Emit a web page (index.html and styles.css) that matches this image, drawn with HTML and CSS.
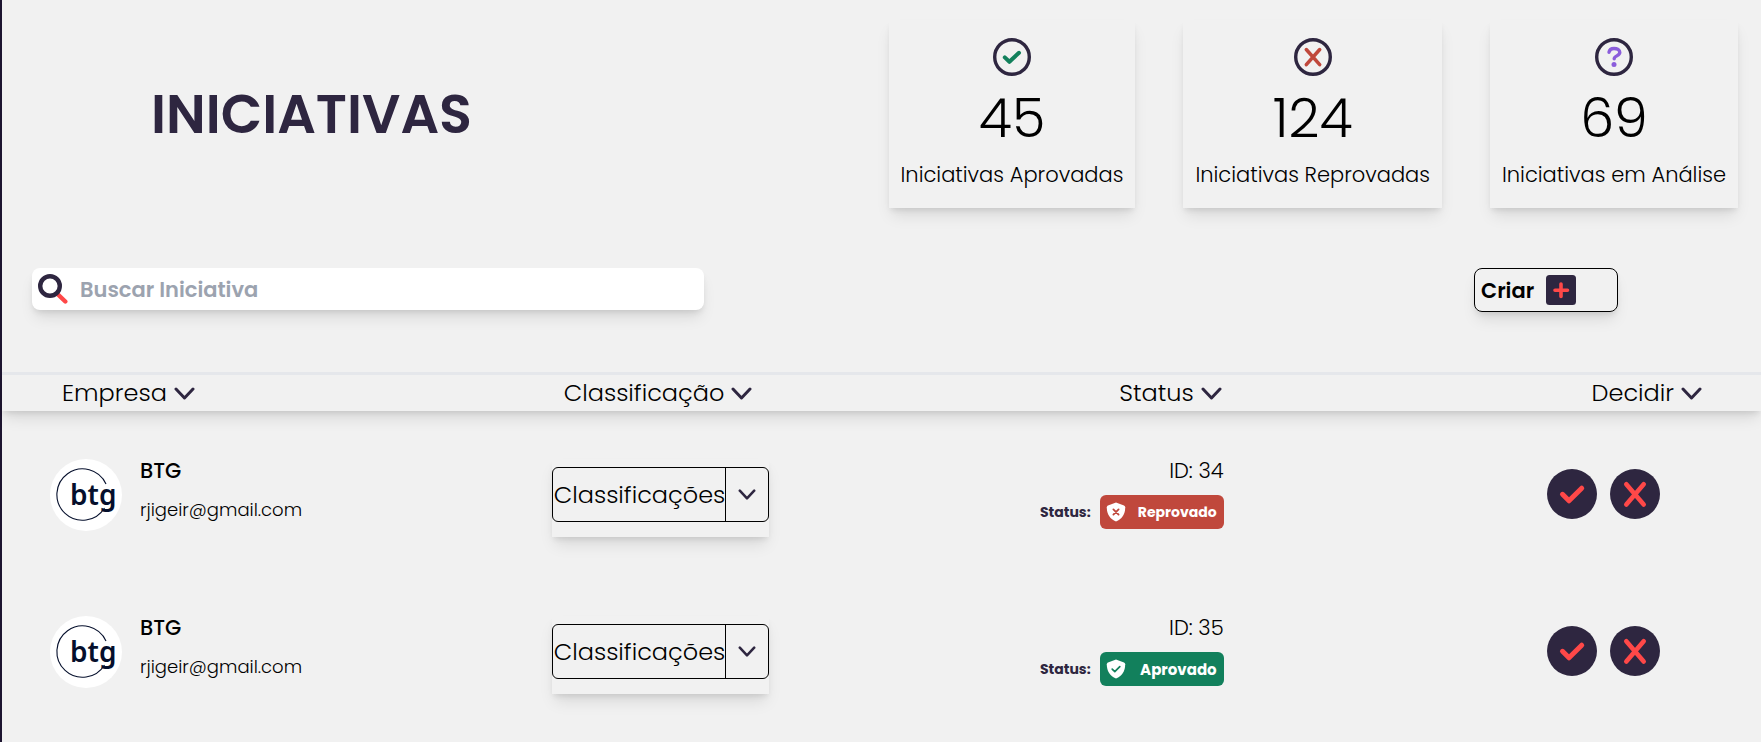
FILE: index.html
```html
<!DOCTYPE html>
<html lang="pt-BR">
<head>
  <meta charset="utf-8">
  <meta name="viewport" content="width=device-width, initial-scale=1">
  <title>Iniciativas</title>
  <link rel="stylesheet" href="styles.css">
</head>
<body>
  <svg class="sprite" aria-hidden="true">
    <symbol id="chevron" viewBox="0 0 21 13"><path d="M2 2l8.500 9L19 2" fill="none" stroke="#2e2640" stroke-width="3" stroke-linecap="round" stroke-linejoin="round"/></symbol>
    <symbol id="accept" viewBox="0 0 50 50"><circle cx="25" cy="25" r="25" fill="#2e2640"/><path d="M15.500 25.300l6.500 6.500L34.700 19.200" fill="none" stroke="#ff4848" stroke-width="5" stroke-linecap="round" stroke-linejoin="round"/></symbol>
    <symbol id="reject" viewBox="0 0 50 50"><circle cx="25" cy="25" r="25" fill="#2e2640"/><path d="M16.300 15.200L33.700 35.600M33.700 15.200L16.300 35.600" fill="none" stroke="#ff4848" stroke-width="4.600" stroke-linecap="round"/></symbol>
  </svg>

  <main class="page">
    <header class="top">
      <h1 class="title">INICIATIVAS</h1>
      <ul class="stats">
        <li class="stat">
          <svg class="stat-icon" viewBox="0 0 38 38" aria-hidden="true"><circle cx="19" cy="19" r="17.300" fill="none" stroke="#2e2640" stroke-width="3.400"/><path d="M11.800 19.400l4.600 4.400 9.600-9" fill="none" stroke="#12805c" stroke-width="4" stroke-linecap="round" stroke-linejoin="round"/></svg>
          <strong class="stat-value">45</strong>
          <span class="stat-label">Iniciativas Aprovadas</span>
        </li>
        <li class="stat">
          <svg class="stat-icon" viewBox="0 0 38 38" aria-hidden="true"><circle cx="19" cy="19" r="17.300" fill="none" stroke="#2e2640" stroke-width="3.400"/><path d="M12.300 11.500L25.700 26.700M25.700 11.500L12.300 26.700" fill="none" stroke="#c0483c" stroke-width="3.500" stroke-linecap="round"/></svg>
          <strong class="stat-value">124</strong>
          <span class="stat-label">Iniciativas Reprovadas</span>
        </li>
        <li class="stat">
          <svg class="stat-icon" viewBox="0 0 38 38" aria-hidden="true"><circle cx="19" cy="19" r="17.300" fill="none" stroke="#2e2640" stroke-width="3.400"/><path d="M14 14.300c.4-2.400 2.400-3.800 5-3.800 3.200 0 5.800 1.400 5.800 4 0 3.400-5.600 3.300-5.600 6.200" fill="none" stroke="#8b5ddb" stroke-width="3.400" stroke-linecap="round"/><circle cx="19" cy="26.500" r="2.500" fill="#8b5ddb"/></svg>
          <strong class="stat-value">69</strong>
          <span class="stat-label">Iniciativas em Análise</span>
        </li>
      </ul>
    </header>

    <div class="toolbar">
      <label class="search">
        <svg class="search-icon" viewBox="0 0 30 30" aria-hidden="true"><path d="M20 20.500l7.300 7" stroke="#ff4848" stroke-width="4.400" stroke-linecap="round"/><circle cx="12" cy="12" r="9.800" fill="none" stroke="#2e2640" stroke-width="4.400"/></svg>
        <input class="search-input" type="search" placeholder="Buscar Iniciativa" aria-label="Buscar Iniciativa">
      </label>
      <button class="create" type="button">
        Criar
        <svg class="create-icon" viewBox="0 0 30 30" aria-hidden="true"><rect width="30" height="30" rx="3.500" fill="#2e2640"/><path d="M15 9v12.500M9 15.200h12.500" stroke="#ff4848" stroke-width="3.600" stroke-linecap="round"/></svg>
      </button>
    </div>

    <table class="table">
      <thead class="head">
        <tr>
          <th class="col-company"><button class="sort" type="button">Empresa <svg class="chevron"><use href="#chevron"/></svg></button></th>
          <th class="col-class"><button class="sort" type="button">Classificação <svg class="chevron"><use href="#chevron"/></svg></button></th>
          <th class="col-status"><button class="sort" type="button">Status <svg class="chevron"><use href="#chevron"/></svg></button></th>
          <th class="col-decide"><button class="sort" type="button">Decidir <svg class="chevron"><use href="#chevron"/></svg></button></th>
        </tr>
      </thead>
      <tbody class="rows">
        <tr>
          <td>
            <div class="company">
              <svg class="avatar" viewBox="0 0 72 72"><circle cx="36" cy="36" r="36" fill="#fff"/><path d="M56 25A25.700 25.700 0 1 0 54.500 49" fill="none" stroke="#050f2c" stroke-width="1.100"/><text class="logo-text" x="20" y="46">btg</text></svg>
              <div class="company-info"><strong class="company-name">BTG</strong><span class="company-mail">rjigeir@gmail.com</span></div>
            </div>
          </td>
          <td>
            <div class="picker">
              <select class="picker-select" aria-label="Classificações"><option>Classificações</option></select>
              <span class="picker-arrow"><svg class="picker-chevron"><use href="#chevron"/></svg></span>
            </div>
          </td>
          <td>
            <div class="state">
              <span class="state-id">ID: 34</span>
              <div class="state-line">
                <span class="state-label">Status:</span>
                <span class="badge badge-rejected">
                  <svg class="shield" viewBox="0 0 20 20" aria-hidden="true"><path d="M10 .6l8 3q1.200.5 1.200 1.700c0 7-3.200 11.700-9.200 14.200C4 17 .8 12.300.8 5.300.8 4.100 2 3.600 2 3.600z" fill="#fff"/><path d="M7.400 7.400l5.200 5.200m0-5.200l-5.200 5.200" stroke="#c0483c" stroke-width="1.800" stroke-linecap="round"/></svg>
                  Reprovado
                </span>
              </div>
            </div>
          </td>
          <td>
            <div class="decide">
              <button class="round" type="button" aria-label="Aprovar"><svg class="round-icon"><use href="#accept"/></svg></button>
              <button class="round" type="button" aria-label="Reprovar"><svg class="round-icon"><use href="#reject"/></svg></button>
            </div>
          </td>
        </tr>
        <tr>
          <td>
            <div class="company">
              <svg class="avatar" viewBox="0 0 72 72"><circle cx="36" cy="36" r="36" fill="#fff"/><path d="M56 25A25.700 25.700 0 1 0 54.500 49" fill="none" stroke="#050f2c" stroke-width="1.100"/><text class="logo-text" x="20" y="46">btg</text></svg>
              <div class="company-info"><strong class="company-name">BTG</strong><span class="company-mail">rjigeir@gmail.com</span></div>
            </div>
          </td>
          <td>
            <div class="picker">
              <select class="picker-select" aria-label="Classificações"><option>Classificações</option></select>
              <span class="picker-arrow"><svg class="picker-chevron"><use href="#chevron"/></svg></span>
            </div>
          </td>
          <td>
            <div class="state">
              <span class="state-id">ID: 35</span>
              <div class="state-line">
                <span class="state-label">Status:</span>
                <span class="badge badge-approved">
                  <svg class="shield" viewBox="0 0 20 20" aria-hidden="true"><path d="M10 .6l8 3q1.200.5 1.200 1.700c0 7-3.200 11.700-9.200 14.200C4 17 .8 12.300.8 5.300.8 4.100 2 3.600 2 3.600z" fill="#fff"/><path d="M6.200 10.200l2.600 2.500 5-5" fill="none" stroke="#12805c" stroke-width="1.700" stroke-linecap="round" stroke-linejoin="round"/></svg>
                  Aprovado
                </span>
              </div>
            </div>
          </td>
          <td>
            <div class="decide">
              <button class="round" type="button" aria-label="Aprovar"><svg class="round-icon"><use href="#accept"/></svg></button>
              <button class="round" type="button" aria-label="Reprovar"><svg class="round-icon"><use href="#reject"/></svg></button>
            </div>
          </td>
        </tr>
      </tbody>
    </table>
  </main>
</body>
</html>
```
FILE: styles.css
```css
:root {
  --ink: #2e2640;
  --surface: #f1f1f1;
  --shadow: 0 10px 15px -3px rgba(0, 0, 0, .1), 0 4px 6px -2px rgba(0, 0, 0, .1);
}

* {
  box-sizing: border-box;
}

body {
  margin: 0;
  background: #fff;
  color: #000;
  font-family: Poppins, Inter, "Open Sans", sans-serif;
  font-weight: 300;
}

button,
input,
select {
  font: inherit;
  color: inherit;
}

.sprite {
  position: absolute;
  width: 0;
  height: 0;
}

.page {
  border-left: 2px solid #1d1530;
  background: var(--surface);
  padding-bottom: 17px;
}

.top {
  display: flex;
  justify-content: space-between;
  align-items: center;
  padding: 20px 23px 0 149px;
}

.title {
  margin: 0;
  color: var(--ink);
  font-size: 54px;
  font-weight: 600;
  line-height: 64px;
}

.stats {
  display: flex;
  gap: 48px;
  margin: 0;
  padding: 0;
  list-style: none;
}

.stat {
  display: flex;
  flex-direction: column;
  align-items: center;
  padding: 18px 12px;
  box-shadow: var(--shadow);
}

.stat-icon {
  width: 38px;
  height: 38px;
}

.stat-value {
  margin: 10px 0 9px;
  font-size: 54px;
  font-weight: 300;
  line-height: 64px;
}

.stat-label {
  font-size: 21px;
  line-height: 31px;
}

.toolbar {
  display: flex;
  justify-content: space-between;
  align-items: flex-start;
  padding: 60px 143px 60px 30px;
}

.search {
  display: flex;
  align-items: center;
  gap: 12px;
  width: 43%;
  max-width: 672px;
  height: 42px;
  padding: 0 6px;
  border-radius: 8px;
  background: #fff;
  box-shadow: var(--shadow);
}

.search-icon {
  flex: none;
  width: 30px;
  height: 30px;
}

.search-input {
  flex: 1;
  min-width: 0;
  padding: 0;
  border: 0;
  outline: 0;
  background: none;
  font-size: 21px;
  font-weight: 600;
}

.search-input::placeholder {
  color: #9ca3af;
}

.create {
  display: flex;
  align-items: center;
  gap: 12px;
  width: 144px;
  height: 44px;
  padding: 0 6px;
  border: 1px solid #000;
  border-radius: 8px;
  background: none;
  box-shadow: var(--shadow);
  font-size: 21px;
  font-weight: 600;
}

.create-icon {
  width: 30px;
  height: 30px;
}

.table {
  width: 100%;
  border-spacing: 0;
  table-layout: fixed;
}

.head {
  box-shadow: var(--shadow);
}

.head th {
  height: 39px;
  padding: 0;
  border-top: 3px solid #e5e7eb;
  font-weight: 300;
  text-align: left;
}

.head .col-company {
  width: 31.25%;
  padding-left: 60px;
}

.head .col-class {
  width: 25%;
  padding-left: 12px;
}

.head .col-status {
  width: 13.2%;
  padding-right: 2px;
  text-align: right;
}

.head .col-decide {
  padding-right: 59px;
  text-align: right;
}

.sort {
  display: inline-flex;
  align-items: center;
  gap: 7px;
  padding: 0;
  border: 0;
  background: none;
  font-size: 24px;
  line-height: 36px;
  vertical-align: top;
}

.chevron {
  width: 21px;
  height: 13px;
}

.rows td {
  height: 157px;
  padding: 48px 0 0;
  vertical-align: top;
}

.company {
  display: flex;
  gap: 18px;
  padding-left: 48px;
}

.avatar {
  width: 72px;
  height: 72px;
}

.logo-text {
  fill: #050f2c;
  font-family: "Noto Sans", sans-serif;
  font-size: 28px;
  font-weight: 600;
}

.company-info {
  display: flex;
  flex-direction: column;
  gap: 13px;
}

.company-name {
  font-size: 21px;
  font-weight: 500;
  line-height: 24px;
}

.company-mail {
  font-size: 18px;
  line-height: 28px;
}

.picker {
  display: grid;
  grid-template-columns: 173px 44px;
  width: 217px;
  padding: 8px 0 15px;
  box-shadow: var(--shadow);
}

.picker-select {
  grid-area: 1 / 1 / 2 / 3;
  height: 55px;
  padding: 0 0 0 1px;
  border: 1px solid #000;
  border-radius: 6px;
  background: none;
  appearance: none;
  font-size: 24px;
}

.picker-arrow {
  grid-area: 1 / 2;
  display: flex;
  align-items: center;
  justify-content: center;
  border-left: 1px solid #000;
  pointer-events: none;
}

.picker-chevron {
  width: 18px;
  height: 11px;
}

.state {
  display: flex;
  flex-direction: column;
  align-items: flex-end;
  gap: 12px;
}

.state-id {
  font-size: 21px;
  line-height: 24px;
}

.state-line {
  display: flex;
  align-items: center;
  gap: 9px;
}

.state-label {
  color: var(--ink);
  font-size: 14px;
  font-weight: 700;
}

.badge {
  display: flex;
  align-items: center;
  justify-content: space-between;
  width: 124px;
  height: 34px;
  padding: 0 7px 0 6px;
  border-radius: 6px;
  color: #fff;
  font-size: 14px;
  font-weight: 700;
}

.badge-rejected {
  background: #c0483c;
}

.badge-approved {
  background: #12805c;
  font-size: 15px;
}

.shield {
  width: 20px;
  height: 20px;
}

.decide {
  display: flex;
  justify-content: flex-end;
  gap: 13px;
  padding: 10px 101px 0 0;
}

.round {
  padding: 0;
  border: 0;
  border-radius: 50%;
  background: none;
}

.round-icon {
  display: block;
  width: 50px;
  height: 50px;
}
```
